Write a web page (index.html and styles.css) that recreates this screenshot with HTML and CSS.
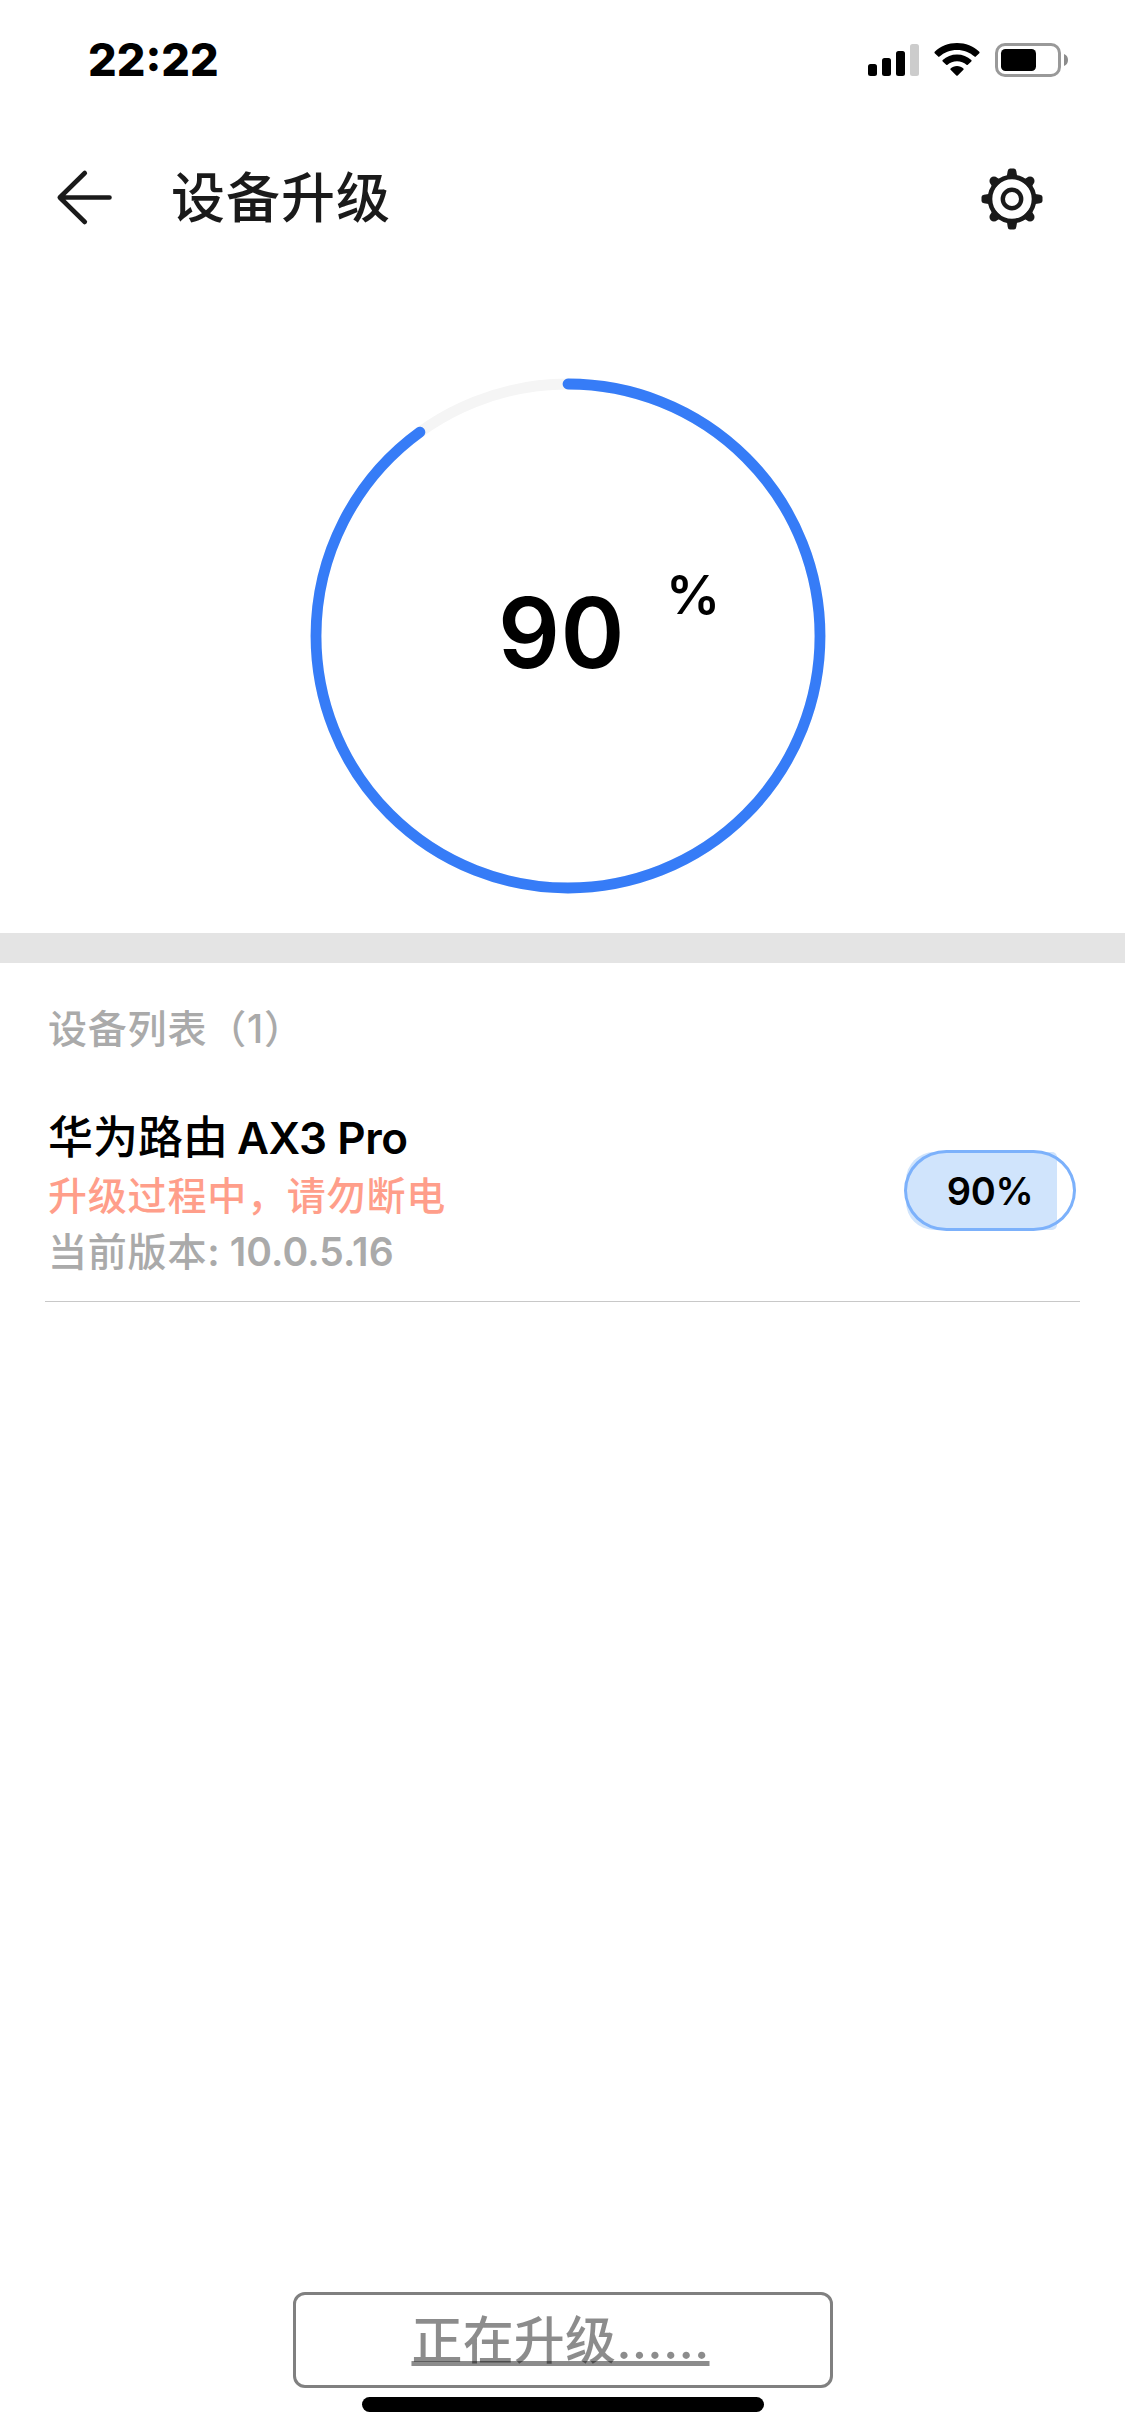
FILE: index.html
```html
<!DOCTYPE html>
<html lang="zh-CN">
<head>
<meta charset="utf-8">
<title>设备升级</title>
<link rel="stylesheet" href="styles.css">
</head>
<body>
<div class="screen">
  <header class="status">
    <span class="clock">22:22</span>
    <div class="status-icons">
      <svg width="51" height="34" viewBox="0 0 51 34">
        <rect x="0" y="21" width="9" height="12" rx="2.5"/>
        <rect x="14" y="15" width="9" height="18" rx="2.5"/>
        <rect x="28" y="8" width="9" height="25" rx="2.5"/>
        <rect x="42" y="1" width="9" height="32" rx="2.5" fill="#ccc"/>
      </svg>
      <svg class="wifi" width="46" height="34" viewBox="0 0 46 34">
        <path d="M23 0C14.300 0 6.500 3.300 .7 8.700Q.1 9.400 .7 10.200L4.200 13.600Q4.800 14.200 5.500 13.600C10 9.500 16.200 7 23 7S36 9.500 40.500 13.600Q41.200 14.200 41.800 13.600L45.300 10.200Q45.900 9.400 45.300 8.700C39.500 3.300 31.700 0 23 0Z"/>
        <path d="M23 11.500C17.500 11.500 12.500 13.500 8.700 17Q8 17.700 8.700 18.400L12.200 21.800Q12.900 22.400 13.500 21.800C16 19.600 19.300 18.300 23 18.300S30 19.600 32.500 21.800Q33.100 22.400 33.800 21.800L37.300 18.400Q38 17.700 37.300 17C33.500 13.500 28.500 11.500 23 11.500Z"/>
        <path d="M23 23C20.500 23 18.200 23.900 16.600 25.400Q15.900 26.100 16.600 26.800L22.300 32.500Q23 33.200 23.700 32.500L29.400 26.800Q30.100 26.100 29.400 25.400C27.800 23.900 25.500 23 23 23Z"/>
      </svg>
      <svg class="battery" width="73" height="34" viewBox="0 0 73 34">
        <rect x="1.500" y="1.500" width="63" height="31" rx="8.500" fill="none" stroke="#999" stroke-width="3"/>
        <rect x="6" y="6" width="35" height="22" rx="4.500"/>
        <path d="M69 11C71.700 12 73 14.300 73 17S71.700 22 69 23Z" fill="#8c8c8c"/>
      </svg>
    </div>
  </header>

  <nav class="nav">
    <svg class="back" width="60" height="60" viewBox="0 0 60 60">
      <path d="M30.800 4L5.800 28.500L30.800 53M5.800 28.500H55.500" fill="none" stroke="#1a1a1a" stroke-width="4.600" stroke-linecap="round" stroke-linejoin="round"/>
    </svg>
    <h1 class="title">设备升级</h1>
    <svg class="gear" width="62" height="62" viewBox="-31 -31 62 62">
      <g fill="#1a1a1a">
        <path id="tooth" d="M-6.500 -20Q-4.800 -23 -4.300 -28Q-4 -30.500 -2 -30.500H2Q4 -30.500 4.300 -28Q4.800 -23 6.500 -20Z"/>
        <use href="#tooth" transform="rotate(90)"/>
        <use href="#tooth" transform="rotate(180)"/>
        <use href="#tooth" transform="rotate(270)"/>
        <path id="knob" d="M-9 -20Q-4.800 -22.500 -4.500 -25.500A4.500 4.500 0 0 1 4.500 -25.500Q4.800 -22.500 9 -20Z" transform="rotate(45)"/>
        <use href="#knob" transform="rotate(90)"/>
        <use href="#knob" transform="rotate(180)"/>
        <use href="#knob" transform="rotate(270)"/>
      </g>
      <circle r="22" fill="none" stroke="#1a1a1a" stroke-width="4.600"/>
      <circle r="9.200" fill="none" stroke="#1a1a1a" stroke-width="4.400"/>
    </svg>
  </nav>

  <section class="progress">
    <div class="ring">
      <svg width="516" height="516" viewBox="-258 -258 516 516">
        <circle r="252" fill="none" stroke="#f5f5f5" stroke-width="10.800"/>
        <circle r="252" fill="none" stroke="#367cf7" stroke-width="10.800" stroke-linecap="round" pathLength="100" stroke-dasharray="90 100" transform="rotate(-90)"/>
      </svg>
      <div class="reading"><span class="value">90</span><span class="unit">%</span></div>
    </div>
  </section>

  <main class="devices">
    <h2 class="list-title">设备列表（1）</h2>
    <article class="device">
      <div class="info">
        <div class="name">华为路由 <span class="model">AX3 Pro</span></div>
        <div class="warning">升级过程中，请勿断电</div>
        <div class="version">当前版本<span class="number">: 10.0.5.16</span></div>
      </div>
      <div class="pill"><span class="pill-fill"></span><span class="pill-text">90%</span></div>
    </article>
  </main>

  <footer class="footer">
    <div class="action"><span class="action-text">正在升级……</span></div>
    <div class="home-bar"></div>
  </footer>
</div>
</body>
</html>
```
FILE: styles.css
```css
* { box-sizing: border-box; }
body {
  margin: 0;
  background: #fff;
  color: #000;
  font-family: Inter, "Noto Sans CJK SC", sans-serif;
}
svg { display: block; flex: none; }
h1, h2 { margin: 0; }
.screen {
  width: 1125px;
  height: 2436px;
  display: flex;
  flex-direction: column;
  overflow: hidden;
}
.status {
  height: 120px;
  padding: 0 57px 0 88px;
  display: flex;
  align-items: center;
  justify-content: space-between;
}
.clock {
  font-size: 45px;
  font-weight: 800;
  line-height: 60px;
}
.status-icons { display: flex; align-items: center; }
.wifi { margin-left: 15px; }
.battery { margin-left: 15px; }
.nav {
  height: 157px;
  padding: 0 82px 0 54px;
  display: flex;
  align-items: center;
}
.title {
  flex: 1;
  margin-left: 57px;
  color: #1a1a1a;
  font-size: 54px;
  font-weight: 500;
  line-height: 80px;
  letter-spacing: 1px;
}
.progress {
  height: 686px;
  padding: 101px 0 0 11px;
  border-bottom: 30px solid #e4e4e4;
  display: flex;
  justify-content: center;
}
.ring {
  width: 516px;
  height: 516px;
  position: relative;
}
.reading {
  position: absolute;
  inset: 0;
  display: flex;
  padding: 205px 0 0 188px;
}
.value {
  width: 168px;
  font-size: 97px;
  font-weight: 600;
  line-height: 100px;
  letter-spacing: .5px;
}
.unit {
  font-size: 54px;
  font-weight: 600;
  line-height: 24px;
}
.devices { padding: 36px 45px 0; }
.list-title {
  padding-left: 3px;
  color: #aaa;
  font-size: 39px;
  font-weight: 500;
  line-height: 60px;
  letter-spacing: .8px;
}
.device {
  height: 243px;
  border-bottom: 1px solid #c8c8c8;
  padding: 49px 4px 0 3px;
  display: flex;
  justify-content: space-between;
}
.name {
  font-size: 45px;
  font-weight: 500;
  line-height: 60px;
}
.model {
  margin-left: -3px;
  font-size: 44px;
  font-weight: 600;
  letter-spacing: -.4px;
}
.warning, .version {
  font-size: 39px;
  font-weight: 500;
  line-height: 56px;
  letter-spacing: .8px;
}
.warning { color: #ff9e8a; }
.version { color: #aaa; }
.number {
  font-weight: 600;
  letter-spacing: .1px;
}
.pill {
  width: 172px;
  height: 81px;
  margin-top: 42px;
  position: relative;
  border: 3px solid #7cb1fb;
  border-radius: 43px / 41px;
  display: flex;
  align-items: center;
  justify-content: center;
}
.pill-fill {
  position: absolute;
  z-index: -1;
  left: -1px;
  top: -1px;
  width: 151px;
  height: 78px;
  background: #d0e4fc;
  border-radius: 28px 5px 5px 28px;
}
.pill-text {
  font-size: 38px;
  font-weight: 600;
  letter-spacing: -.4px;
}
.footer {
  margin-top: auto;
  padding-bottom: 24px;
  display: flex;
  flex-direction: column;
  align-items: center;
  gap: 9px;
}
.action {
  width: 540px;
  height: 96px;
  border: 3px solid #808080;
  border-radius: 12px;
  padding: 1px 4px 0 0;
  display: flex;
  align-items: center;
  justify-content: center;
}
.action-text {
  color: rgba(0, 0, 0, .45);
  font-size: 51px;
  font-weight: 500;
  line-height: 60px;
  letter-spacing: .2px;
  text-decoration: underline;
  text-decoration-thickness: 5px;
  text-underline-offset: 2px;
  text-decoration-skip-ink: none;
}
.home-bar {
  width: 402px;
  height: 15px;
  border-radius: 8px;
  background: #000;
}
```
